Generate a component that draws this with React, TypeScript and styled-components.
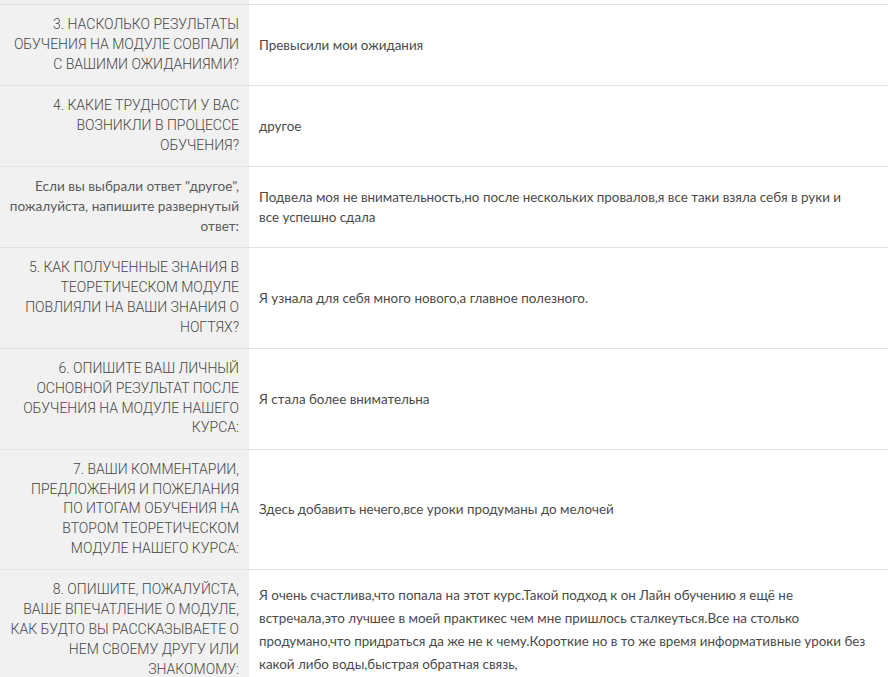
import React from 'react'
import styled, { createGlobalStyle } from 'styled-components'

const GlobalStyle = createGlobalStyle`
  html, body {
    margin: 0;
    padding: 0;
    background: #ffffff;
  }
  body {
    font-family: Lato, 'Open Sans', sans-serif;
  }
`

const Table = styled.div`
  display: flex;
  flex-direction: column;
  width: 888px;
`

const Row = styled.div`
  display: grid;
  grid-template-columns: 249px 1fr;
  border-top: 1px solid #e2e2e2;

  &:first-child {
    border-top: none;
  }
`

const Question = styled.div<{ $caps?: boolean }>`
  background: #f1f1f1;
  padding: 10.3px 10px 10.3px 6px;
  text-align: right;
  white-space: pre;
  color: ${(p) => (p.$caps ? '#474747' : '#5a5a5a')};
  font-family: ${(p) => (p.$caps ? "Roboto, 'Noto Sans', sans-serif" : "Lato, 'Open Sans', sans-serif")};
  font-size: ${(p) => (p.$caps ? '14px' : '13.6px')};
  font-weight: ${(p) => (p.$caps ? 300 : 400)};
  line-height: 19.8px;
`

const Answer = styled.div<{ $lh?: number }>`
  display: flex;
  align-items: center;
  padding: 0 10px;
  color: #4a4a4a;
  font-size: 13.4px;
  line-height: ${(p) => p.$lh ?? 20}px;
  white-space: pre-line;
`

const Stub = styled.div`
  height: 4px;
`

const StubLeft = styled.div`
  background: #f1f1f1;
`

interface Item {
  q: string
  a: string
  caps?: boolean
  lh?: number
}

const items: Item[] = [
  {
    q: '3. НАСКОЛЬКО РЕЗУЛЬТАТЫ\nОБУЧЕНИЯ НА МОДУЛЕ СОВПАЛИ\nС ВАШИМИ ОЖИДАНИЯМИ?',
    a: 'Превысили мои ожидания',
    caps: true,
  },
  {
    q: '4. КАКИЕ ТРУДНОСТИ У ВАС\nВОЗНИКЛИ В ПРОЦЕССЕ\nОБУЧЕНИЯ?',
    a: 'другое',
    caps: true,
  },
  {
    q: 'Если вы выбрали ответ "другое",\nпожалуйста, напишите развернутый\nответ:',
    a: 'Подвела моя не внимательность,но после нескольких провалов,я все таки взяла себя в руки и\nвсе успешно сдала',
  },
  {
    q: '5. КАК ПОЛУЧЕННЫЕ ЗНАНИЯ В\nТЕОРЕТИЧЕСКОМ МОДУЛЕ\nПОВЛИЯЛИ НА ВАШИ ЗНАНИЯ О\nНОГТЯХ?',
    a: 'Я узнала для себя много нового,а главное полезного.',
    caps: true,
  },
  {
    q: '6. ОПИШИТЕ ВАШ ЛИЧНЫЙ\nОСНОВНОЙ РЕЗУЛЬТАТ ПОСЛЕ\nОБУЧЕНИЯ НА МОДУЛЕ НАШЕГО\nКУРСА:',
    a: 'Я стала более внимательна',
    caps: true,
  },
  {
    q: '7. ВАШИ КОММЕНТАРИИ,\nПРЕДЛОЖЕНИЯ И ПОЖЕЛАНИЯ\nПО ИТОГАМ ОБУЧЕНИЯ НА\nВТОРОМ ТЕОРЕТИЧЕСКОМ\nМОДУЛЕ НАШЕГО КУРСА:',
    a: 'Здесь добавить нечего,все уроки продуманы до мелочей',
    caps: true,
  },
  {
    q: '8. ОПИШИТЕ, ПОЖАЛУЙСТА,\nВАШЕ ВПЕЧАТЛЕНИЕ О МОДУЛЕ,\nКАК БУДТО ВЫ РАССКАЗЫВАЕТЕ О\nНЕМ СВОЕМУ ДРУГУ ИЛИ\nЗНАКОМОМУ:',
    a: 'Я очень счастлива,что попала на этот курс.Такой подход к он Лайн обучению я ещё не\nвстречала,это лучшее в моей практикес чем мне пришлось сталкеуться.Все на столько\nпродумано,что придраться да же не к чему.Короткие но в то же время информативные уроки без\nкакой либо воды,быстрая обратная связь,',
    caps: true,
    lh: 23,
  },
]

const App: React.FC = () => {
  return (
    <>
      <GlobalStyle />
      <Table>
        <Row as={Stub}>
          <StubLeft />
          <div />
        </Row>
        {items.map((item, index) => (
          <Row key={index}>
            <Question $caps={item.caps}>{item.q}</Question>
            <Answer $lh={item.lh}>{item.a}</Answer>
          </Row>
        ))}
      </Table>
    </>
  )
}

export default App
